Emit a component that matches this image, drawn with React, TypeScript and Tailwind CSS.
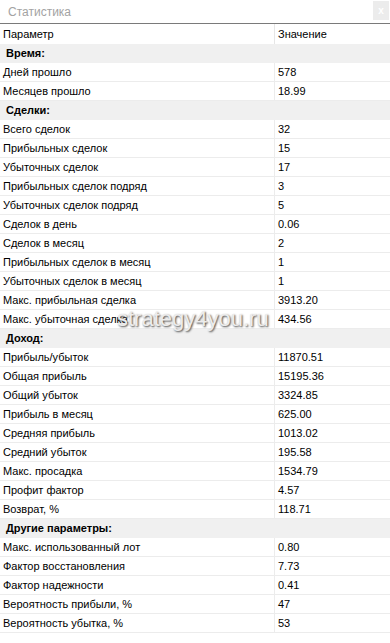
import React from 'react';

type Row = { label: string; value?: string; section?: boolean };

const rows: Row[] = [
  { label: 'Время:', section: true },
  { label: 'Дней прошло', value: '578' },
  { label: 'Месяцев прошло', value: '18.99' },
  { label: 'Сделки:', section: true },
  { label: 'Всего сделок', value: '32' },
  { label: 'Прибыльных сделок', value: '15' },
  { label: 'Убыточных сделок', value: '17' },
  { label: 'Прибыльных сделок подряд', value: '3' },
  { label: 'Убыточных сделок подряд', value: '5' },
  { label: 'Сделок в день', value: '0.06' },
  { label: 'Сделок в месяц', value: '2' },
  { label: 'Прибыльных сделок в месяц', value: '1' },
  { label: 'Убыточных сделок в месяц', value: '1' },
  { label: 'Макс. прибыльная сделка', value: '3913.20' },
  { label: 'Макс. убыточная сделка', value: '434.56' },
  { label: 'Доход:', section: true },
  { label: 'Прибыль/убыток', value: '11870.51' },
  { label: 'Общая прибыль', value: '15195.36' },
  { label: 'Общий убыток', value: '3324.85' },
  { label: 'Прибыль в месяц', value: '625.00' },
  { label: 'Средняя прибыль', value: '1013.02' },
  { label: 'Средний убыток', value: '195.58' },
  { label: 'Макс. просадка', value: '1534.79' },
  { label: 'Профит фактор', value: '4.57' },
  { label: 'Возврат, %', value: '118.71' },
  { label: 'Другие параметры:', section: true },
  { label: 'Макс. использованный лот', value: '0.80' },
  { label: 'Фактор восстановления', value: '7.73' },
  { label: 'Фактор надежности', value: '0.41' },
  { label: 'Вероятность прибыли, %', value: '47' },
  { label: 'Вероятность убытка, %', value: '53' },
];

export default function App() {
  return (
    <div className="relative w-[390px] h-[643px] bg-white overflow-hidden font-['Liberation_Sans',Arial,sans-serif]">
      {/* title bar */}
      <div className="flex items-center justify-between h-[24px] border-b border-[#7a7a7a]">
        <span className="pl-[8px] text-[12px] text-[#a3a3a3]">Статистика</span>
        <div className="mr-[1px] mb-[2px] w-[16px] h-[19px] bg-[#ececec] flex items-center justify-center text-[10px] text-white font-bold leading-none">
          x
        </div>
      </div>

      {/* header */}
      <div className="flex h-[20px] items-center text-[11px] text-black">
        <div className="w-[275px] pl-[3px] border-r border-[#e6e6e6] h-full flex items-center">Параметр</div>
        <div className="pl-[3px]">Значение</div>
      </div>

      {rows.map((r, i) =>
        r.section ? (
          <div key={i} className="h-[19px] bg-[#f0f0f0] flex items-center pl-[6px] text-[11px] font-bold text-black">
            {r.label}
          </div>
        ) : (
          <div key={i} className="flex h-[19px] border-b border-[#ececec] text-[11px] text-black">
            <div className="w-[275px] pl-[3px] border-r border-[#ececec] flex items-center">{r.label}</div>
            <div className="pl-[3px] flex items-center">{r.value}</div>
          </div>
        )
      )}

      {/* watermark */}
      <div className="absolute left-[117px] top-[306px] text-[22px] leading-[26px] text-[#ececec] [text-shadow:1px_1px_2px_#444] pointer-events-none">
        strategy4you.ru
      </div>
    </div>
  );
}
